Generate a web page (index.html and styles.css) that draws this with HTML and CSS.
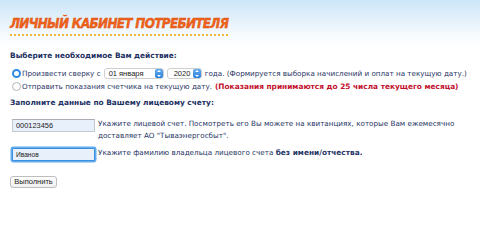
FILE: index.html
```html
<!DOCTYPE html>
<html lang="ru">
<head>
<meta charset="utf-8">
<link rel="stylesheet" href="styles.css">
</head>
<body>
<div class="page">
  <h1 class="title">Личный кабинет потребителя</h1>
  <p class="section first">Выберите необходимое Вам действие:</p>
  <div class="options">
    <label class="option">
      <span class="radio checked"></span>
      <span>Произвести сверку с</span>
      <span class="select month">01 января<span class="stepper"></span></span>
      <span class="select year">2020<span class="stepper"></span></span>
      <span>года. (Формируется выборка начислений и оплат на текущую дату.)</span>
    </label>
    <label class="option">
      <span class="radio"></span>
      <span>Отправить показания счетчика на текущую дату.</span>
      <span class="warn">(Показания принимаются до 25 числа текущего месяца)</span>
    </label>
  </div>
  <p class="section second">Заполните данные по Вашему лицевому счету:</p>
  <div class="field">
    <span class="input">000123456</span>
    <span class="hint">Укажите лицевой счет. Посмотреть его Вы можете на квитанциях, которые Вам ежемесячно доставляет АО "Тываэнергосбыт".</span>
  </div>
  <div class="field second-field">
    <span class="input focus">Иванов</span>
    <span class="hint">Укажите фамилию владельца лицевого счета <b>без имени/отчества.</b></span>
  </div>
  <button class="btn">Выполнить</button>
</div>
</body>
</html>
```
FILE: styles.css
```css
html {
  margin: 0;
  padding: 0;
  background-color: #ffffff;
  background-image: linear-gradient(to bottom, #cde6f8 0px, #e4f1fb 20px, #f7fbfe 36px, #ffffff 48px);
  background-repeat: no-repeat;
  background-size: 100% 48px;
}
body {
  margin: 0;
  padding: 0;
  width: 480px;
  height: 219px;
  overflow: hidden;
  font-family: "DejaVu Sans", Verdana, sans-serif;
  font-size: 7.2px;
  color: #1f3564;
}
.page {
  padding: 16px 10px 0 10px;
}
.title {
  margin: 0;
  display: inline-block;
  font-family: "DejaVu Sans Condensed", "DejaVu Sans", sans-serif;
  font-stretch: condensed;
  font-size: 13.4px;
  font-weight: bold;
  font-style: italic;
  text-transform: uppercase;
  letter-spacing: -0.7px;
  color: #f0621a;
  -webkit-text-stroke: 0.35px #d9500f;
  line-height: 16px;
  padding-bottom: 2px;
  border-bottom: 2px dotted #f2b53a;
}
.section {
  margin: 0;
  font-weight: bold;
  font-size: 7.4px;
  line-height: 10px;
  color: #1b2f63;
}
.section.first {
  margin-top: 15px;
}
.section.second {
  margin-top: 5px;
}
.options {
  margin-top: 6px;
  display: flex;
  flex-direction: column;
}
.option {
  display: flex;
  align-items: center;
  gap: 3px;
  white-space: nowrap;
  height: 13px;
}
.radio {
  width: 9px;
  height: 9px;
  border-radius: 50%;
  border: 1px solid #b5b5b5;
  background: #fff;
  margin-left: 2px;
  margin-right: -2px;
  box-sizing: border-box;
  flex: none;
}
.radio.checked {
  border: 2.5px solid #2d8be6;
  background: #fff;
}
.select {
  position: relative;
  display: inline-flex;
  align-items: center;
  height: 11px;
  border: 1px solid #cfcfcf;
  border-radius: 3px;
  background: #fff;
  padding-left: 4px;
  box-sizing: border-box;
  font-family: "Liberation Sans", Arial, sans-serif;
  font-size: 7.5px;
  color: #222;
}
.select.month {
  width: 60px;
}
.select.year {
  width: 35px;
  padding-left: 6px;
}
.stepper {
  position: absolute;
  right: 0;
  top: 0;
  width: 8px;
  height: 9px;
  border-radius: 2px;
  background: linear-gradient(#63acf0, #2a7fdc);
}
.stepper::before, .stepper::after {
  content: "";
  position: absolute;
  left: 2px;
  border-left: 2px solid transparent;
  border-right: 2px solid transparent;
}
.stepper::before {
  top: 1px;
  border-bottom: 2px solid #fff;
}
.stepper::after {
  bottom: 1px;
  border-top: 2px solid #fff;
}
.warn {
  color: #c3102c;
  font-weight: bold;
  font-size: 7.4px;
}
.field {
  display: flex;
  align-items: flex-start;
  gap: 3px;
  margin-top: 10px;
}
.field.second-field {
  margin-top: 5px;
}
.input {
  flex: none;
  width: 83px;
  height: 13px;
  margin-left: 2px;
  margin-top: 1px;
  box-sizing: border-box;
  border: 1px solid #c4c9cf;
  border-top-color: #a9aeb4;
  background: #e8f0fb;
  padding: 0 3px;
  font-family: "Liberation Sans", Arial, sans-serif;
  font-size: 7.4px;
  color: #222;
  line-height: 11px;
}
.input.focus {
  border: 1px solid #3b8fdc;
  box-shadow: 0 0 0 1.5px #62aef0;
  border-radius: 1px;
  font-size: 6.6px;
}
.hint {
  line-height: 12px;
  width: 375px;
}
.hint b {
  font-size: 7.4px;
}
.btn {
  display: block;
  margin-top: 15px;
  font-family: "Liberation Sans", Arial, sans-serif;
  font-size: 7.5px;
  color: #222;
  background: linear-gradient(#ffffff, #f0f0f0);
  border: 1px solid #bdbdbd;
  border-radius: 3px;
  height: 12px;
  padding: 0 3px;
  line-height: 10px;
  width: 47px;
}
```
